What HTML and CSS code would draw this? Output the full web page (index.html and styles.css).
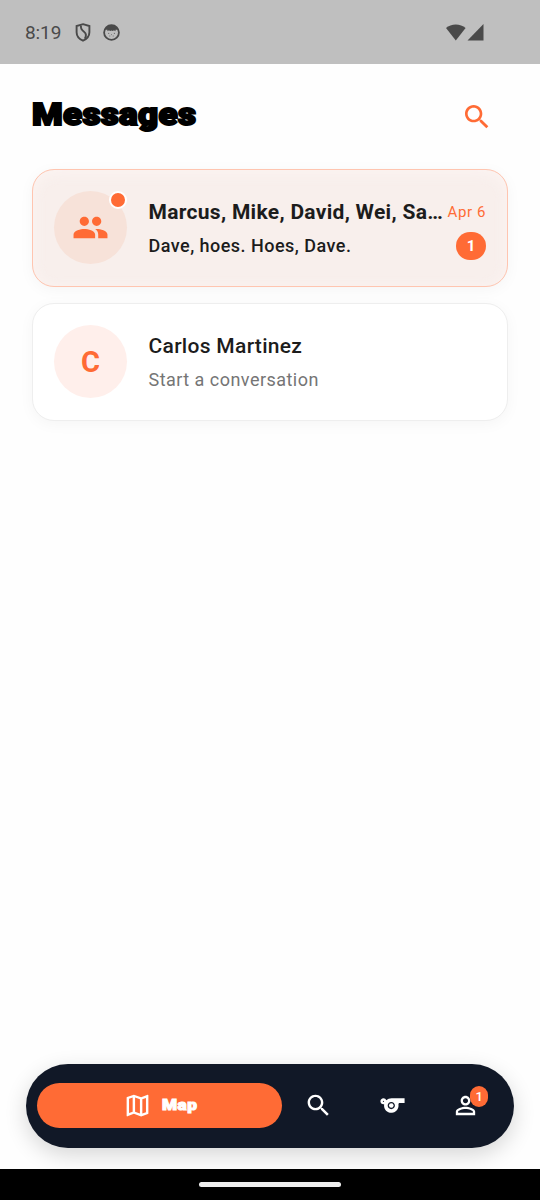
FILE: index.html
```html
<!DOCTYPE html>
<html lang="en">
<head>
<meta charset="utf-8">
<title>Messages</title>
<link rel="stylesheet" href="styles.css">
</head>
<body>
<div class="screen">
  <header class="status">
    <span class="clock">8:19</span>
    <svg class="shield" width="16" height="19" viewBox="0 0 16 19"><path d="M8 1.2 14.400 3v6.200c0 4-2.700 6.800-6.400 8.500-3.700-1.700-6.400-4.500-6.400-8.500V3z" fill="none" stroke="#4a4a4a" stroke-width="1.900"/><path d="M6 2.500c-.6 3 .6 4.500 3 6.200 2.300 1.700 2.400 4.300.8 7" fill="none" stroke="#4a4a4a" stroke-width="1.900"/></svg>
    <svg class="face" width="17" height="17" viewBox="0 0 17 17"><circle cx="8.500" cy="8.500" r="7.400" fill="none" stroke="#4a4a4a" stroke-width="1.800"/><path d="M2.200 6.300C3 2.300 6 1 8.500 1s5.500 1.300 6.300 5.300l-1.900-.8-.6 1.800-1.300-1-1.200.7-1.300-.6-1.300.6-1.300-.7-1.200 1-.6-1.800z" fill="#4a4a4a"/><path d="M5.300 9.400h.9M10.900 9.400h.9M6.500 12h.7M9.800 12h.7M8.200 10.600h.6" stroke="#4a4a4a" stroke-width=".9"/></svg>
    <span class="grow"></span>
    <svg width="38" height="18" viewBox="0 0 38 18"><path d="M0 4.100C5-.8 14.600-.8 19.600 4.100L9.800 16.500z" fill="#4a4a4a"/><path d="M37.500 0V16.500h-16z" fill="#4a4a4a"/></svg>
  </header>

  <main class="content">
    <div class="heading">
      <h1 class="title">Messages</h1>
      <svg class="find" width="32" height="32" viewBox="0 0 24 24"><path d="M15.500 14h-.79l-.28-.27C15.410 12.590 16 11.110 16 9.500 16 5.910 13.090 3 9.500 3S3 5.910 3 9.500 5.910 16 9.500 16c1.610 0 3.090-.59 4.230-1.570l.27.28v.79l5 4.990L20.490 19l-4.990-5zm-6 0C7.010 14 5 11.990 5 9.500S7.010 5 9.500 5 14 7.010 14 9.500 11.990 14 9.500 14z"/></svg>
    </div>

    <article class="card unread">
      <div class="avatar">
        <svg width="37" height="37" viewBox="0 0 24 24"><path d="M16 11c1.660 0 2.990-1.340 2.990-3S17.660 5 16 5c-1.660 0-3 1.340-3 3s1.340 3 3 3zm-8 0c1.660 0 2.990-1.340 2.990-3S9.660 5 8 5C6.340 5 5 6.340 5 8s1.340 3 3 3zm0 2c-2.330 0-7 1.170-7 3.500V19h14v-2.500c0-2.330-4.670-3.500-7-3.500zm8 0c-.29 0-.62.02-.97.05 1.160.84 1.970 1.970 1.970 3.450V19h6v-2.500c0-2.330-4.670-3.500-7-3.500z"/></svg>
        <span class="dot"></span>
      </div>
      <div class="body">
        <div class="row"><span class="name">Marcus, Mike, David, Wei, Sa…</span><span class="date">Apr 6</span></div>
        <div class="row second"><span class="preview">Dave, hoes. Hoes, Dave.</span><span class="count">1</span></div>
      </div>
    </article>

    <article class="card">
      <div class="avatar letter">C</div>
      <div class="body">
        <div class="row"><span class="name">Carlos Martinez</span></div>
        <div class="row second"><span class="preview">Start a conversation</span></div>
      </div>
    </article>
  </main>

  <nav class="nav">
    <div class="tab-active">
      <svg width="29" height="29" viewBox="0 0 24 24"><path d="M20.500 3l-.16.03L15 5.100 9 3 3.360 4.900c-.21.07-.36.25-.36.48V20.500c0 .28.22.5.5.5l.16-.03L9 18.900l6 2.100 5.640-1.900c.21-.07.36-.25.36-.48V3.500c0-.28-.22-.5-.5-.5zM10 5.470l4 1.400v11.660l-4-1.400V5.470zm-5 .99l3-1.010v11.700l-3 1.160V6.460zm14 11.080l-3 1.010V6.860l3-1.160v11.840z"/></svg>
      <span class="tab-label">Map</span>
    </div>
    <div class="tab"><svg width="29" height="29" viewBox="0 0 24 24"><path d="M15.500 14h-.79l-.28-.27C15.410 12.590 16 11.110 16 9.500 16 5.910 13.090 3 9.500 3S3 5.910 3 9.500 5.910 16 9.500 16c1.610 0 3.090-.59 4.230-1.570l.27.28v.79l5 4.990L20.490 19l-4.990-5zm-6 0C7.010 14 5 11.990 5 9.500S7.010 5 9.500 5 14 7.010 14 9.500 11.990 14 9.500 14z"/></svg></div>
    <div class="tab"><svg width="29" height="29" viewBox="0 0 24 24"><path fill-rule="evenodd" d="M11.230 6c-1.660 0-3.220.66-4.360 1.730C6.540 6.730 5.610 6 4.500 6 3.120 6 2 7.120 2 8.500S3.120 11 4.500 11c.21 0 .41-.03.61-.08-.05.25-.09.51-.1.78-.18 3.680 2.950 6.680 6.680 6.270 2.550-.28 4.680-2.260 5.190-4.770.15-.71.15-1.400.06-2.060-.09-.6.38-1.130.99-1.130H22V6H11.230zM4.500 9C4.220 9 4 8.780 4 8.500S4.220 8 4.500 8s.5.220.5.500-.22.500-.5.500zM11 15c-1.660 0-3-1.340-3-3s1.340-3 3-3 3 1.340 3 3-1.340 3-3 3z"/><circle cx="11" cy="12" r="1.900"/></svg></div>
    <div class="tab"><svg width="29" height="29" viewBox="0 0 24 24"><path d="M12 5.900c1.160 0 2.100.94 2.100 2.100s-.94 2.100-2.100 2.100S9.900 9.160 9.900 8s.94-2.100 2.100-2.100m0 9c2.970 0 6.100 1.460 6.100 2.100v1.100H5.900V17c0-.64 3.130-2.100 6.100-2.100M12 4C9.790 4 8 5.790 8 8s1.790 4 4 4 4-1.790 4-4-1.790-4-4-4zm0 9c-2.670 0-8 1.340-8 4v3h16v-3c0-2.660-5.330-4-8-4z"/></svg><span class="badge">1</span></div>
  </nav>

  <footer class="system"><span class="handle"></span></footer>
</div>
</body>
</html>
```
FILE: styles.css
```css
* { box-sizing: border-box; }
body { margin: 0; font-family: Roboto, "Liberation Sans", sans-serif; }
svg { display: block; flex: none; }
.screen { width: 540px; height: 1200px; display: flex; flex-direction: column; background: #fefefe; overflow: hidden; }
.grow { flex: 1; }

.status { height: 64px; flex: none; background: #bfbfbf; display: flex; align-items: center; padding: 1px 56px 0 25px; color: #4a4a4a; }
.clock { width: 50px; font-size: 19px; line-height: 24px; letter-spacing: -0.1px; padding-top: 1px; }
.face { margin-left: 12px; }

.content { flex: 1; padding: 32px 32px 0; }
.heading { height: 41px; display: flex; align-items: center; justify-content: space-between; padding-right: 15px; margin-bottom: 32px; }
.title { margin: -3px 0 0; font-size: 31px; line-height: 38px; font-weight: 900; color: #000; letter-spacing: .3px; -webkit-text-stroke: 2px #000; padding-left: 0; transform: scaleX(1.13); transform-origin: left; }
.find { fill: #ff6b35; }

.card { height: 118px; display: flex; align-items: center; padding: 0 21px; border: 1.500px solid #eee; border-radius: 22px; background: #fff; box-shadow: 0 3px 15px rgba(0,0,0,.04); margin-bottom: 16px; }
.unread { background: #f8efec; border-color: #ffc5b0; box-shadow: 0 3px 15px rgba(0,0,0,.04), inset 0 3px 15px rgba(255,248,246,.65); }
.avatar { position: relative; flex: none; width: 73px; height: 73px; margin-top: -1px; border-radius: 50%; background: #ffefeb; display: flex; align-items: center; justify-content: center; color: #ff6b35; }
.unread .avatar { background: #f7e2d9; }
.avatar svg { fill: #ff6b35; }
.letter { font-size: 29px; font-weight: 700; }
.dot { position: absolute; right: 0; top: 0; width: 18px; height: 18px; border-radius: 50%; background: #ff6b35; border: 2px solid #fff; }
.body { flex: 1; min-width: 0; padding: 1px 0 0 21.500px; }
.row { display: flex; align-items: center; justify-content: space-between; height: 28px; white-space: nowrap; }
.second { margin-top: 6px; }
.name { font-size: 21px; font-weight: 500; letter-spacing: .3px; color: #1c1c1c; }
.unread .name { font-weight: 700; }
.date { font-size: 15px; letter-spacing: .6px; color: #ff6b35; }
.preview { font-size: 18px; letter-spacing: .47px; color: #757575; }
.unread .preview { color: #1c1c1c; font-weight: 500; }
.count { width: 30px; height: 28px; border-radius: 14px; background: #ff6b35; color: #fff; font-size: 15px; font-weight: 700; display: flex; align-items: center; justify-content: center; }

.nav { flex: none; width: 487.500px; height: 84px; margin: 0 26px 21.500px; border-radius: 42px; background: #111827; box-shadow: 0 7px 22px rgba(0,0,0,.16); display: flex; align-items: center; padding: 0 11px 1px; }
.nav svg { fill: #fff; }
.tab-active { width: 245.500px; height: 45px; border-radius: 22.500px; background: #ff6b35; display: flex; align-items: center; justify-content: center; gap: 10px; padding-right: 3px; }
.tab-label { color: #fff; font-size: 15px; font-weight: 900; letter-spacing: .4px; -webkit-text-stroke: 1px #fff; transform: scaleX(1.15); transform-origin: left; }
.tab { position: relative; width: 73.500px; display: flex; justify-content: center; }
.badge { position: absolute; left: 41px; top: -5px; width: 18px; height: 21px; border-radius: 9px; background: #ff6b35; color: #fff; font-size: 13px; line-height: 21px; text-align: center; font-weight: 500; }

.system { height: 31px; flex: none; background: #000; display: flex; align-items: center; justify-content: center; }
.handle { width: 142px; height: 5px; border-radius: 3px; background: #eee; }
```
